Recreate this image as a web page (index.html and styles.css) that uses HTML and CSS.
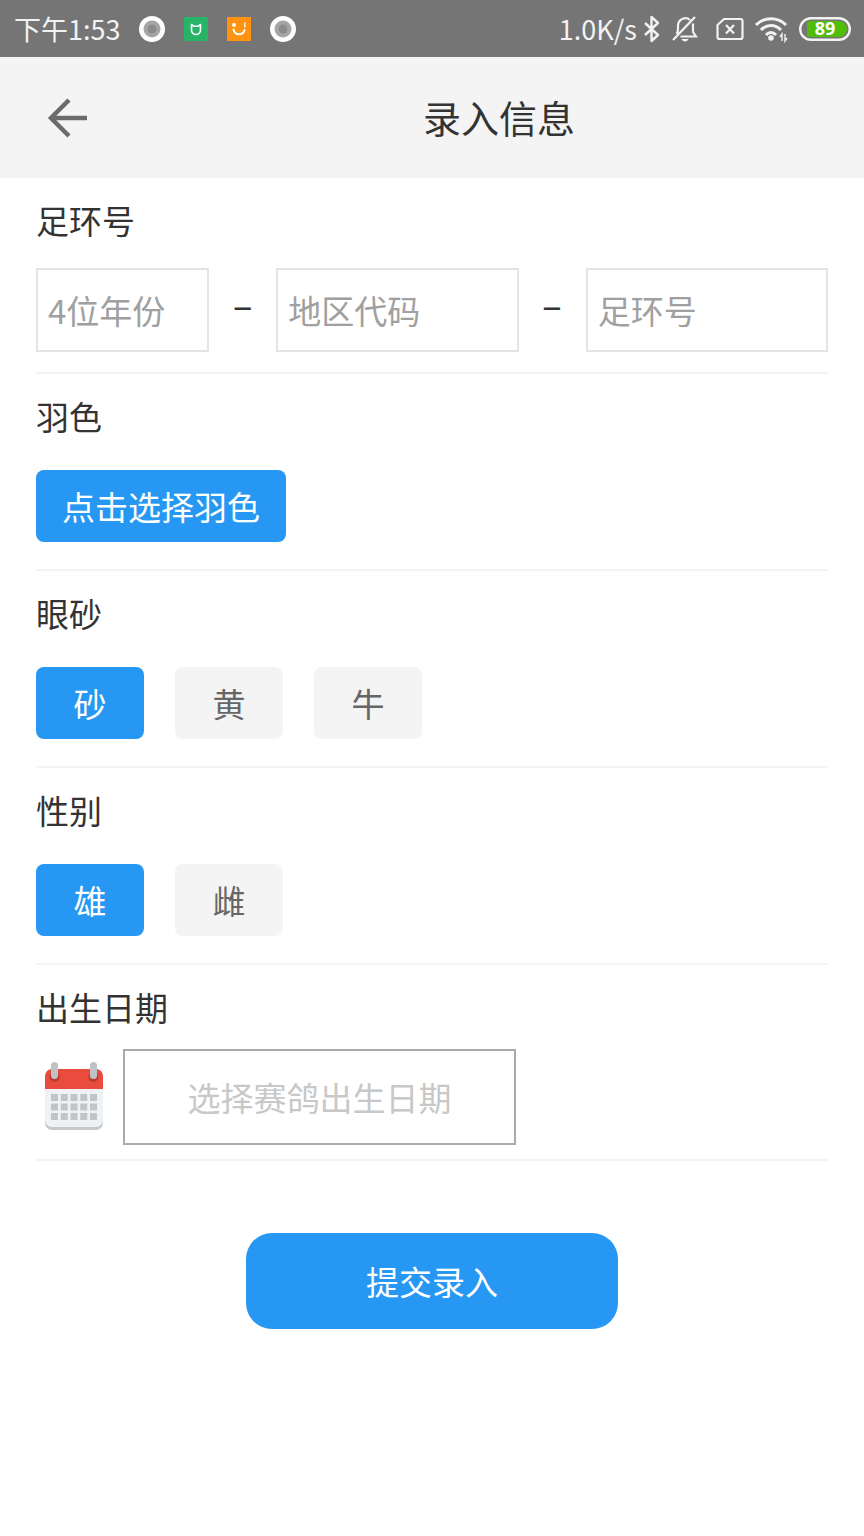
FILE: index.html
```html
<!DOCTYPE html>
<html lang="zh-CN">
<head>
<meta charset="utf-8">
<meta name="viewport" content="width=device-width, initial-scale=1">
<title>录入信息</title>
<link rel="stylesheet" href="styles.css">
</head>
<body>
<div class="status">
  <div class="status-left">
    <span class="time">下午1:53</span>
    <svg width="26" height="26" viewBox="0 0 26 26"><circle cx="13" cy="13" r="13" fill="#fff"/><circle cx="13" cy="13" r="8.500" fill="#a6a6a6"/><circle cx="13" cy="13" r="4.500" fill="#8c8c8c"/></svg>
    <svg width="24" height="24" viewBox="0 0 24 24"><rect width="24" height="24" rx="1" fill="#27b466"/><path d="M7.500 7.500v5.500a4.500 4.500 0 0 0 9 0V7.500l-2.500 1.800h-4z" fill="none" stroke="#fff" stroke-width="1.600" stroke-linejoin="round"/></svg>
    <svg width="24" height="24" viewBox="0 0 24 24"><rect width="24" height="24" fill="#ff9311"/><circle cx="7" cy="8" r="2" fill="#fff"/><path d="M6.500 12.500c1.500 6.500 9.500 6 11 .5" fill="none" stroke="#fff" stroke-width="2" stroke-linecap="round"/><path d="M17.800 5.500v5" stroke="#fff" stroke-width="1.200"/></svg>
    <svg width="26" height="26" viewBox="0 0 26 26"><circle cx="13" cy="13" r="13" fill="#fff"/><circle cx="13" cy="13" r="8.500" fill="#a6a6a6"/><circle cx="13" cy="13" r="4.500" fill="#8c8c8c"/></svg>
  </div>
  <div class="status-right">
    <div class="net">
      <span>1.0K/s</span>
      <svg width="18" height="28" viewBox="0 0 18 28"><path d="M2 8l13 12-6.500 6V2L15 8 2 20" fill="none" stroke="#f2f2f2" stroke-width="2.400" stroke-linejoin="round"/></svg>
    </div>
    <svg class="bell" width="26" height="28" viewBox="0 0 26 28"><path d="M1 25L23 2M4.500 19c2-2 1.500-5 1.500-8.500C6.500 3.500 14 1.500 18 5M21 8.500V17l3 4.500H8.500" fill="none" stroke="#f2f2f2" stroke-width="2.200"/><path d="M9.500 24h7c-1 3.200-6 3.200-7 0z" fill="#f2f2f2"/></svg>
    <svg width="28" height="24" viewBox="0 0 28 24"><path d="M8 2h16.500a2 2 0 0 1 2 2v16a2 2 0 0 1-2 2H3.500a2 2 0 0 1-2-2V8z" fill="none" stroke="#f2f2f2" stroke-width="2.200" stroke-linejoin="round"/><path d="M10 8l8 8.500M18 8l-8 8.500" stroke="#f2f2f2" stroke-width="2.200"/></svg>
    <svg width="33" height="28" viewBox="0 0 33 28"><g fill="none" stroke="#f2f2f2" stroke-width="3"><path d="M1 10c8-8.500 22-8.500 30 0"/><path d="M6 15c6-6 14-6 20 0"/><path d="M11 20c3-3.500 7-3.500 10 0"/></g><circle cx="16" cy="23" r="2.800" fill="#f2f2f2"/><path d="M27 26v-7l-2 3M30 19v7l2-3" fill="none" stroke="#f2f2f2" stroke-width="1.400"/></svg>
    <svg class="battery" width="52" height="24" viewBox="0 0 52 24"><rect x="1.200" y="1.200" width="49.600" height="21.600" rx="10.800" fill="none" stroke="#f2f2f2" stroke-width="2.400"/><path d="M10 4h30a8 8 0 0 1 0 16H10q-2 0-2-2V6q0-2 2-2z" fill="#51bd0b"/><text x="26" y="18" text-anchor="middle">89</text></svg>
  </div>
</div>
<header class="header">
  <button class="back" type="button" aria-label="返回">
    <svg width="40" height="40" viewBox="0 0 40 40"><path d="M40 20H4M22 2L4 20l18 18" fill="none" stroke="#6b6b6b" stroke-width="4.500"/></svg>
  </button>
  <h1 class="title">录入信息</h1>
</header>
<form class="form">
  <section class="section">
    <label class="label" for="year">足环号</label>
    <div class="ring">
      <input class="field" id="year" type="text" placeholder="4位年份">
      <span class="dash">–</span>
      <input class="field" type="text" aria-label="地区代码" placeholder="地区代码">
      <span class="dash">–</span>
      <input class="field" type="text" aria-label="足环号" placeholder="足环号">
    </div>
  </section>
  <section class="section">
    <h2 class="label">羽色</h2>
    <div class="options"><button class="pick" type="button">点击选择羽色</button></div>
  </section>
  <section class="section">
    <h2 class="label">眼砂</h2>
    <div class="options">
      <label class="option"><input type="radio" name="eye" checked><span>砂</span></label>
      <label class="option"><input type="radio" name="eye"><span>黄</span></label>
      <label class="option"><input type="radio" name="eye"><span>牛</span></label>
    </div>
  </section>
  <section class="section">
    <h2 class="label">性别</h2>
    <div class="options">
      <label class="option"><input type="radio" name="sex" checked><span>雄</span></label>
      <label class="option"><input type="radio" name="sex"><span>雌</span></label>
    </div>
  </section>
  <section class="section">
    <label class="label" for="birth">出生日期</label>
    <div class="birth">
      <svg width="60" height="70" viewBox="0 0 60 70">
        <path d="M1 26h58v35a7 7 0 0 1-7 7H8a7 7 0 0 1-7-7z" fill="#c5c9cc"/>
        <path d="M1 26h58v32a7 7 0 0 1-7 7H8a7 7 0 0 1-7-7z" fill="#eff2f4"/>
        <path d="M1 27V14a7 7 0 0 1 7-7h44a7 7 0 0 1 7 7v13z" fill="#e94b3c"/>
        <circle cx="10.500" cy="15" r="5" fill="#bd3a30"/><circle cx="49.500" cy="15" r="5" fill="#bd3a30"/>
        <rect x="7" y="0" width="7" height="17" rx="3.500" fill="#bec3c7"/><rect x="46" y="0" width="7" height="17" rx="3.500" fill="#bec3c7"/>
        <path d="M7 35.500h46M7 45h46M7 54.500h46" stroke="#c1c5c8" stroke-width="7" stroke-dasharray="7 2.750"/>
      </svg>
      <input class="date" id="birth" type="text" placeholder="选择赛鸽出生日期" readonly>
    </div>
  </section>
  <button class="submit" type="submit">提交录入</button>
</form>
</body>
</html>
```
FILE: styles.css
```css
* {
  box-sizing: border-box;
}

body {
  margin: 0;
  background: #fff;
  color: #333;
  font-family: "Noto Sans CJK SC", sans-serif;
  font-size: 33px;
}

button,
input {
  font: inherit;
}

svg {
  display: block;
  flex: none;
}

.status {
  display: flex;
  justify-content: space-between;
  align-items: center;
  height: 57px;
  padding: 0 13px 0 14px;
  background: #757575;
  color: #f2f2f2;
  font-size: 27px;
  line-height: 56px;
  white-space: nowrap;
}

.status-left {
  display: flex;
  align-items: center;
  gap: 19px;
}

.status-right {
  display: flex;
  align-items: center;
  gap: 11px;
}

.net {
  display: flex;
  align-items: center;
  gap: 6px;
}

.bell {
  margin-right: 7px;
}

.battery text {
  fill: #fff;
  font: bold 18px "Noto Sans", sans-serif;
}

.header {
  display: flex;
  align-items: center;
  height: 121px;
  background: #f4f4f4;
}

.back {
  width: 134px;
  padding: 0 0 0 47px;
  border: 0;
  background: none;
}

.title {
  flex: 1;
  margin: 0;
  padding-bottom: 2px;
  font-size: 38px;
  font-weight: 400;
  line-height: 56px;
  text-align: center;
}

.form {
  padding: 0 36px;
}

.section {
  padding-top: 18px;
  border-bottom: 2px solid #f4f4f4;
}

.label {
  display: block;
  margin: 0;
  font-size: 33px;
  font-weight: 400;
  line-height: 48px;
}

.ring {
  display: grid;
  grid-template-columns: 173fr 67px 242fr 67px 242fr;
  align-items: center;
  padding: 24px 0 20px;
}

.field {
  width: 100%;
  min-width: 0;
  height: 84px;
  padding: 0 10px;
  border: 2px solid #e4e4e4;
  border-radius: 0;
  background: #fff;
}

.field::placeholder {
  color: #a0a0a0;
}

.dash {
  font-family: Roboto, sans-serif;
  line-height: 48px;
  text-align: center;
}

.options {
  display: flex;
  gap: 31px;
  padding: 30px 0 27px;
}

.pick {
  height: 72px;
  padding: 0 26px;
  border: 0;
  border-radius: 8px;
  background: #2698f3;
  color: #fff;
}

.option {
  position: relative;
}

.option input {
  position: absolute;
  inset: 0;
  margin: 0;
  opacity: 0;
}

.option span {
  display: block;
  width: 108px;
  border-radius: 8px;
  background: #f4f4f4;
  color: #666;
  line-height: 72px;
  text-align: center;
}

.option input:checked + span {
  background: #2698f3;
  color: #fff;
}

.birth {
  display: flex;
  align-items: center;
  gap: 19px;
  padding: 18px 0 14px 8px;
}

.date {
  width: 393px;
  height: 96px;
  border: 2px solid #aaa;
  border-radius: 0;
  background: #fff;
  text-align: center;
}

.date::placeholder {
  color: #c8c8c8;
}

.submit {
  display: block;
  width: 372px;
  height: 96px;
  margin: 72px auto 0;
  border: 0;
  border-radius: 26px;
  background: #2698f3;
  color: #fff;
}
```
